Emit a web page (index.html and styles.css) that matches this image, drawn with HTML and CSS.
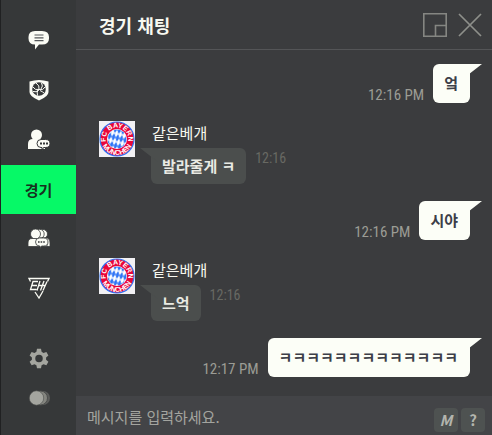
FILE: index.html
```
<!DOCTYPE html>
<html lang="ko">
<head>
	<meta charset="utf-8">
	<meta name="viewport" content="width=device-width, initial-scale=1">
	<title>경기 채팅</title>
	<link rel="stylesheet" href="styles.css">
</head>
<body>
	<!-- club crest, used by every avatar -->
	<svg class="defs" width="0" height="0" aria-hidden="true">
		<defs>
			<pattern id="lozenge" width="4" height="8" patternUnits="userSpaceOnUse" patternTransform="rotate(14)">
				<path fill="#2f74f5" d="M2 0 4 4 2 8 0 4z"/>
			</pattern>
			<path id="arcTop" d="M7.430 22A11.300 11.300 0 1 1 28.570 22"/>
			<path id="arcBottom" d="M2 18a16 16 0 0 0 32 0"/>
			<symbol id="crest" viewBox="0 0 36 36">
				<path fill="#f2f1f4" d="M0 0h36v36H0z"/>
				<circle cx="18" cy="18" r="17" fill="#e9063a" stroke="#2f74f5" stroke-width="1.200"/>
				<circle cx="18" cy="18" r="10" fill="#fff"/>
				<circle cx="18" cy="18" r="9.500" fill="url(#lozenge)"/>
				<text class="crest-text" text-anchor="middle"><textPath href="#arcTop" startOffset="50%">FC BAYERN</textPath></text>
				<text class="crest-text" text-anchor="middle"><textPath href="#arcBottom" startOffset="50%">MÜNCHEN</textPath></text>
			</symbol>
		</defs>
	</svg>

	<div class="app">
		<nav class="sidebar">
			<div class="tabs">
				<button class="tab" type="button" aria-label="전체 채팅">
					<svg width="22" height="22" viewBox="0 0 22 22">
						<path fill="#fbfcf5" d="M7 2h7q7 0 7 6v1.500q0 6-7 6h-3L7 20.500v-5q-6.500 0-6.500-6V8Q.5 2 7 2z"/>
						<path stroke="#55575a" stroke-width="1.200" d="M6.500 6h9M6.500 8.800h9M6.500 11.600h9"/>
					</svg>
				</button>
				<button class="tab" type="button" aria-label="구단">
					<svg width="22" height="22" viewBox="0 0 22 22">
						<path fill="#fbfcf5" d="M1.500 2.500Q11-.5 20.500 2.500V13q0 4.500-9.500 8.500Q1.500 17.500 1.500 13z"/>
						<circle cx="11" cy="10" r="6.800" fill="#363839"/>
						<path fill="none" stroke="#fbfcf5" stroke-width="1" d="M11 10.500q1-4-3-6.500M11 10.500q-4 1-6-2.500M17 8q-2 4-6 2.500M13.500 4q2 3-.5 6M11 10.500q-3 2-1.500 6M5 12.500q3 1.500 6-2M12 11.500q3 1.500 4 2.500"/>
					</svg>
				</button>
				<button class="tab" type="button" aria-label="친구 채팅">
					<svg width="22" height="22" viewBox="0 0 22 22">
						<circle cx="8.500" cy="6" r="5.500" fill="#fbfcf5"/>
						<path fill="#fbfcf5" d="M0 20v-5q0-5 5-5h8q3 0 4 3v7z"/>
						<path fill="#fbfcf5" stroke="#363839" stroke-width="1" d="M13 10.500h4.500q4.500 0 4.500 4t-4.500 4h-2L14 21.500v-3h-1q-4 0-4-4t4-4z"/>
						<path stroke="#363839" stroke-width="2" stroke-dasharray="2 1" d="M12 14.500h8"/>
					</svg>
				</button>
				<button class="tab active" type="button" aria-current="true">경기</button>
				<button class="tab" type="button" aria-label="그룹 채팅">
					<svg width="22" height="22" viewBox="0 0 22 22">
						<g fill="#fbfcf5" stroke="#363839" stroke-width=".8">
							<circle cx="15" cy="6" r="4.500"/>
							<path d="M9 18.500V15q0-5 5-5h4q4 0 4 5v3.500z"/>
							<circle cx="11.500" cy="6" r="4.700"/>
							<path d="M4 18.500V15q0-5 5-5h6q4 0 4 5v3.500z"/>
							<circle cx="7.500" cy="6" r="5"/>
							<path d="M0 18.500V15q0-4.500 4-4.500h7q4 0 4 4.500v3.500z"/>
							<path d="M11.500 10h4q4.500 0 4.500 4t-4.500 4h-2L12 20.500V18h-.5q-4 0-4-4t4-4z"/>
						</g>
						<path stroke="#363839" stroke-width="1.600" stroke-dasharray="1.600 1" d="M10 14h7"/>
					</svg>
				</button>
				<button class="tab" type="button" aria-label="e스포츠">
					<svg width="22" height="22" viewBox="0 0 22 22" fill="none" stroke="#fbfcf5" stroke-width="1.300">
						<path d="M2.500 4.500 1 1.500h20l-1.500 3M7 15l4 6 4-7"/>
						<path d="M10 4.500H5L2.500 12.500h6M4 8.500h5M12 4 9 13.500M19 4.500l-4 9M16 4l-3.500 9.500M11 8.500h6"/>
					</svg>
				</button>
			</div>
			<div class="tools">
				<button class="tool" type="button" aria-label="설정">
					<svg width="22" height="22" viewBox="0 0 22 22">
						<path fill="#a4a59f" fill-rule="evenodd" d="M9 .8h4l.6 3 1.900 1.100 2.900-1 2 3.500-2.300 2v2.300l2.300 2-2 3.500-2.900-1-1.900 1.100-.6 3H9l-.6-3-1.900-1.100-2.900 1-2-3.500 2.300-2V9.400l-2.300-2 2-3.500 2.900 1 1.900-1.100zM11 6.800a3.700 3.700 0 1 0 0 7.500 3.700 3.700 0 1 0 0-7.500z"/>
					</svg>
				</button>
				<button class="tool" type="button" aria-label="투명도">
					<svg width="22" height="16" viewBox="0 0 22 16">
						<circle cx="15" cy="8" r="7" fill="#5c5d5b"/>
						<circle cx="12.500" cy="8" r="7" fill="#858680" stroke="#4b4d4c"/>
						<circle cx="8.500" cy="8" r="7.200" fill="#a4a59f" stroke="#4b4d4c" stroke-width=".6"/>
					</svg>
				</button>
			</div>
		</nav>

		<main class="chat">
			<header class="chat-header">
				<h1>경기 채팅</h1>
				<button class="icon-btn" type="button" aria-label="작게 보기">
					<svg width="24" height="24" viewBox="0 0 24 24" fill="none" stroke="#858682" stroke-width="1.600">
						<path d="M.8.800h22.400v22.400H.8zM12.500 23V12.500H23"/>
					</svg>
				</button>
				<button class="icon-btn" type="button" aria-label="닫기">
					<svg width="24" height="24" viewBox="0 0 24 24" stroke="#8e8f8b" stroke-width="1.700">
						<path d="M1 1l22 22M23 1L1 23"/>
					</svg>
				</button>
			</header>

			<section class="messages">
				<div class="msg me">
					<time>12:16 PM</time>
					<p class="bubble">엌</p>
				</div>

				<div class="msg them">
					<svg class="avatar" role="img" aria-label="FC Bayern München"><use href="#crest"/></svg>
					<div class="body">
						<div class="name">같은베개</div>
						<div class="line">
							<p class="bubble">발라줄게 ㅋ</p>
							<time>12:16</time>
						</div>
					</div>
				</div>

				<div class="msg me">
					<time>12:16 PM</time>
					<p class="bubble">시야</p>
				</div>

				<div class="msg them">
					<svg class="avatar" role="img" aria-label="FC Bayern München"><use href="#crest"/></svg>
					<div class="body">
						<div class="name">같은베개</div>
						<div class="line">
							<p class="bubble">느억</p>
							<time>12:16</time>
						</div>
					</div>
				</div>

				<div class="msg me">
					<time>12:17 PM</time>
					<p class="bubble">ㅋㅋㅋㅋㅋㅋㅋㅋㅋㅋㅋㅋㅋ</p>
				</div>
			</section>

			<form class="composer">
				<input type="text" placeholder="메시지를 입력하세요." aria-label="메시지">
				<button class="key italic" type="button">M</button>
				<button class="key" type="button">?</button>
			</form>
		</main>
	</div>
</body>
</html>
```
FILE: styles.css
```
* {
	box-sizing: border-box;
}

body {
	margin: 0;
	background: #3b3c3e;
	color: #f7f8f0;
	font-family: "Noto Sans CJK KR", sans-serif;
	font-size: 15px;
	line-height: 20px;
}

button {
	padding: 0;
	border: 0;
	background: none;
	color: inherit;
	font: inherit;
	cursor: pointer;
}

svg {
	display: block;
}

.defs {
	position: absolute;
}

.app {
	display: flex;
	min-height: 100vh;
	border-left: 1px solid #202122;
}

/* sidebar */
.sidebar {
	display: flex;
	flex-direction: column;
	justify-content: space-between;
	flex: 0 0 75px;
	padding: 14px 0 18px;
	background: #363839;
}

.tabs,
.tools {
	display: flex;
	flex-direction: column;
}

.tab,
.tool {
	display: flex;
	align-items: center;
	justify-content: center;
	height: 49px;
}

.tab {
	margin-top: 1px;
}

.tab.active ~ .tab {
	margin-top: 0;
}

.tool {
	height: 39px;
}

.tab.active {
	background: #06f967;
	color: #17301f;
	font-weight: bold;
}

/* chat */
.chat {
	display: flex;
	flex-direction: column;
	flex: 1;
	min-width: 0;
}

.chat-header {
	display: flex;
	align-items: center;
	gap: 11px;
	height: 50px;
	padding: 0 10px 0 23px;
	border-bottom: 1px solid #545557;
}

.chat-header h1 {
	flex: 1;
	margin: 0;
	font-size: 18px;
	font-weight: bold;
}

.messages {
	display: flex;
	flex-direction: column;
	flex: 1;
	gap: 17px;
	padding: 14px 22px 18px 23px;
}

.msg {
	display: flex;
}

.me {
	justify-content: flex-end;
	align-items: flex-end;
	gap: 9px;
}

.bubble {
	position: relative;
	margin: 0;
	padding: 8px 11px;
	border-radius: 6px;
	background: #4b4e4d;
	color: #e9eae3;
	font-weight: bold;
}

.bubble::before {
	content: "";
	position: absolute;
	top: 0;
	left: -11px;
	width: 18px;
	height: 14px;
	background: inherit;
	clip-path: polygon(0 0, 100% 0, 100% 100%);
}

.me .bubble {
	padding: 9px 12px 10px 11px;
	background: #fcfef7;
	color: #3c3e48;
}

.me .bubble::before {
	left: auto;
	right: -12px;
	clip-path: polygon(0 0, 100% 0, 0 100%);
}

time {
	color: #9b9c95;
	font-family: "Roboto Condensed", Roboto, sans-serif;
	font-size: 15px;
	line-height: 16px;
}

.them {
	gap: 16px;
}

.them time {
	padding-top: 2px;
	color: #686963;
	font-size: 14px;
}

.avatar {
	flex: none;
	width: 36px;
	height: 36px;
	margin-top: 1px;
}

.crest-text {
	fill: #fff;
	font: bold 7px "Liberation Sans", sans-serif;
}

.name {
	padding: 3px 1px 5px;
}

.line {
	display: flex;
	gap: 9px;
}

/* input row */
.composer {
	display: flex;
	align-items: flex-end;
	gap: 3px;
	height: 39px;
	padding: 0 7px 3px 11px;
	background: #434447;
}

.composer input {
	flex: 1;
	align-self: stretch;
	min-width: 0;
	padding: 6px 0 0;
	border: 0;
	outline: 0;
	background: none;
	color: #f7f8f0;
	font: inherit;
}

.composer input::placeholder {
	color: #a3a49f;
	opacity: 1;
}

.key {
	width: 24px;
	height: 24px;
	border-radius: 4px;
	background: #4e5251;
	color: #b3b5ae;
	font-weight: bold;
}

.key.italic {
	font-style: italic;
}
```
